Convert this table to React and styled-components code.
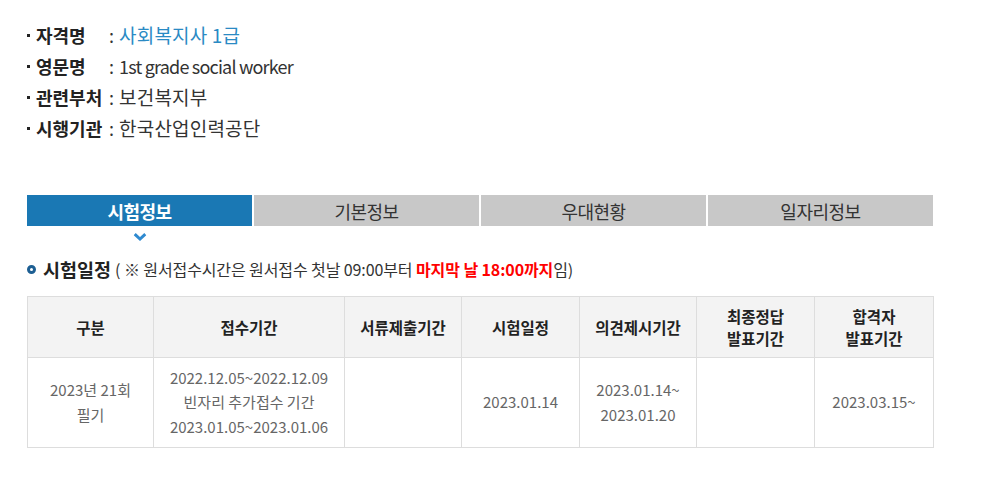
import styled, { createGlobalStyle } from "styled-components";

const GlobalStyle = createGlobalStyle`
  body {
    margin: 0;
    background: #fff;
    font-family: "Noto Sans CJK KR", "Noto Sans", sans-serif;
    color: #333;
  }
`;

const info = [
  { label: "자격명", value: "사회복지사 1급", highlight: true },
  { label: "영문명", value: "1st grade social worker", latin: true },
  { label: "관련부처", value: "보건복지부" },
  { label: "시행기관", value: "한국산업인력공단" },
];

const tabs = ["시험정보", "기본정보", "우대현황", "일자리정보"];

const columns = [
  { title: ["구분"], width: 126 },
  { title: ["접수기간"], width: 191 },
  { title: ["서류제출기간"], width: 117 },
  { title: ["시험일정"], width: 118 },
  { title: ["의견제시기간"], width: 117 },
  { title: ["최종정답", "발표기간"], width: 118 },
  { title: ["합격자", "발표기간"], width: 119 },
];

const row = [
  ["2023년 21회", "필기"],
  ["2022.12.05~2022.12.09", "빈자리 추가접수 기간", "2023.01.05~2023.01.06"],
  [],
  ["2023.01.14"],
  ["2023.01.14~", "2023.01.20"],
  [],
  ["2023.03.15~"],
];

function App() {
  return (
    <Page>
      <GlobalStyle />
      <InfoList>
        {info.map((item) => (
          <InfoItem key={item.label}>
            <Dot />
            <Label>{item.label}</Label>
            <Colon>:</Colon>
            <Value $highlight={item.highlight} $latin={item.latin}>
              {item.value}
            </Value>
          </InfoItem>
        ))}
      </InfoList>

      <TabBar>
        {tabs.map((t, i) => (
          <Tab key={t} $active={i === 0}>
            {t}
            {i === 0 && (
              <Chevron width="13" height="8" viewBox="0 0 13 8">
                <path d="M1.2 1.2 L6.5 6 L11.8 1.2" fill="none" stroke="#2f8ad0" strokeWidth="3" />
              </Chevron>
            )}
          </Tab>
        ))}
      </TabBar>

      <SectionTitle>
        <Ring />
        <TitleText>시험일정</TitleText>
        <Note>
          ( ※ 원서접수시간은 원서접수 첫날 09:00부터 <Red>마지막 날 18:00까지</Red>임)
        </Note>
      </SectionTitle>

      <Table>
        <colgroup>
          {columns.map((c, i) => (
            <col key={i} style={{ width: c.width }} />
          ))}
        </colgroup>
        <thead>
          <tr>
            {columns.map((c, i) => (
              <Th key={i}>
                {c.title.map((l, j) => (
                  <Line key={j}>{l}</Line>
                ))}
              </Th>
            ))}
          </tr>
        </thead>
        <tbody>
          <tr>
            {row.map((lines, i) => (
              <Td key={i}>
                {lines.map((l, j) => (
                  <Line key={j}>{l}</Line>
                ))}
              </Td>
            ))}
          </tr>
        </tbody>
      </Table>
    </Page>
  );
}

export default App;

const Page = styled.div`
  padding: 19px 0 0 27px;
  width: 906px;
`;

const InfoList = styled.ul`
  list-style: none;
  margin: 0;
  padding: 0;
`;

const InfoItem = styled.li`
  display: flex;
  align-items: center;
  height: 31px;
  font-size: 18px;
`;

const Dot = styled.span`
  width: 3px;
  height: 3px;
  background: #222;
  margin: 2px 6px 0 0;
`;

const Label = styled.span`
  min-width: 73px;
  font-weight: bold;
  color: #222;
  letter-spacing: 0;
`;

const Colon = styled.span`
  color: #333;
  margin-right: 5px;
`;

const Value = styled.span`
  color: ${(p) => (p.$highlight ? "#2a8ac4" : "#333")};
  font-size: ${(p) => (p.$latin ? "18px" : "19px")};
  letter-spacing: ${(p) => (p.$latin ? "-0.8px" : "0.2px")};
`;

const TabBar = styled.div`
  display: flex;
  gap: 2px;
  margin-top: 52px;
`;

const Tab = styled.div`
  position: relative;
  flex: 1;
  height: 31px;
  display: flex;
  align-items: center;
  justify-content: center;
  font-size: 18px;
  letter-spacing: -0.5px;
  background: ${(p) => (p.$active ? "#1a78b4" : "#c8c8c8")};
  color: ${(p) => (p.$active ? "#fff" : "#333")};
  font-weight: ${(p) => (p.$active ? "bold" : "normal")};
`;

const Chevron = styled.svg`
  position: absolute;
  left: 50%;
  top: 38px;
  transform: translateX(-50%);
`;

const SectionTitle = styled.div`
  display: flex;
  align-items: center;
  margin-top: 30px;
  height: 26px;
`;

const Ring = styled.span`
  width: 3px;
  height: 3px;
  border: 3px solid #1d5f93;
  border-radius: 50%;
  margin: 0 7px 0 0;
`;

const TitleText = styled.span`
  font-size: 18.5px;
  font-weight: bold;
  color: #222;
  margin-right: 4px;
`;

const Note = styled.span`
  font-size: 16px;
  color: #333;
  letter-spacing: -0.1px;
`;

const Red = styled.span`
  color: #f00;
  font-weight: bold;
`;

const Table = styled.table`
  margin-top: 14px;
  width: 906px;
  border-collapse: collapse;
  table-layout: fixed;
`;

const Th = styled.th`
  height: 60px;
  background: #f3f3f3;
  border: 1px solid #ddd;
  font-size: 15.5px;
  font-weight: bold;
  color: #222;
  line-height: 22px;
  padding: 0;
`;

const Td = styled.td`
  height: 89px;
  border: 1px solid #ddd;
  text-align: center;
  font-size: 15px;
  color: #666;
  line-height: 24.5px;
  padding: 0;
`;

const Line = styled.div``;
